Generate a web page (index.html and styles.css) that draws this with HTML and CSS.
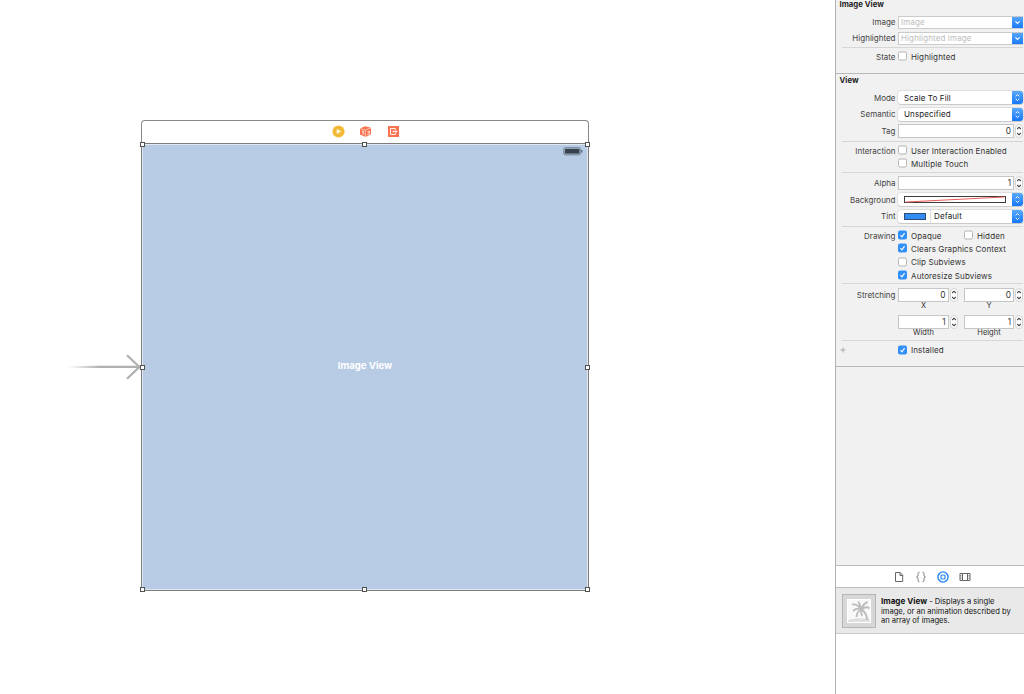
FILE: index.html
```html
<!DOCTYPE html>
<html lang="en">
<head>
<meta charset="utf-8">
<title>Storyboard</title>
<link rel="stylesheet" href="styles.css">
</head>
<body>
<svg class="defs" width="0" height="0">
  <symbol id="tick" viewBox="0 0 10 10"><path d="M2.800 5.200 4.400 7 7.300 2.900" fill="none" stroke="#fff" stroke-width="1.200"/></symbol>
  <symbol id="down" viewBox="0 0 12 13"><path d="m3.800 5.300 2.200 2.200 2.200-2.200" fill="none" stroke="#fff" stroke-width="1.200"/></symbol>
  <symbol id="updown" viewBox="0 0 12 13"><path d="m4 5.200 2-1.900 2 1.900M4 7.900l2 1.900 2-1.900" fill="none" stroke="#fff" stroke-width="1"/></symbol>
  <symbol id="step" viewBox="0 0 8 14"><rect x=".5" y=".5" width="7" height="13" rx="3.500" fill="#fff" stroke="#d2d2d2"/><path d="M2.200 5 4 3.200 5.800 5M2.200 9 4 10.800 5.800 9" fill="none" stroke="#444" stroke-width="1.100"/></symbol>
</svg>
<div class="app">
  <main class="canvas">
    <svg class="entry" width="74" height="30" viewBox="0 0 74 30">
      <defs><linearGradient id="fade"><stop offset="0" stop-color="#b0b0b0" stop-opacity="0"/><stop offset=".45" stop-color="#b0b0b0"/></linearGradient></defs>
      <path d="M0 14.200 28 13.800H71v2.200H0z" fill="url(#fade)"/>
      <path d="m59 3.200 12.500 11.700L59 26.800" fill="none" stroke="#b0b0b0" stroke-width="2.200"/>
    </svg>
    <div class="scene">
      <div class="dock">
        <svg width="13" height="13" viewBox="0 0 13 13"><circle cx="6.500" cy="6.500" r="6.100" fill="#f5bd3e"/><circle cx="6.500" cy="6.500" r="4.200" fill="none" stroke="#e9ae30" stroke-width=".7"/><path d="M5 4.600 8.600 6.500 5 8.400z" fill="#fffbe8" stroke="#fffbe8" stroke-width=".6"/></svg>
        <svg width="13" height="13" viewBox="0 0 13 13"><path d="m1 3.600 5.200-2.400L12 2.800v6.500L6.500 12 1 9.600z" fill="#fa7250"/><path d="M1 3.700 6.300 5 12 2.900M6.300 5v7" fill="none" stroke="#ffd5c9" stroke-width=".8"/><path d="m3 6.500 1.200-.4v3.500M8.300 7l2-.7v2.400l-1.800.8" fill="none" stroke="#fff" stroke-width=".9"/></svg>
        <svg width="13" height="13" viewBox="0 0 13 13"><rect x="1" y="1" width="11" height="11" fill="#fa7250"/><path d="M8.300 5V3.500H3.500v6h4.800V8M6.200 5.500v2M6.300 6.500h3" fill="none" stroke="#fff" stroke-width=".9"/><path d="m8.700 4.900 2 1.600-2 1.600z" fill="#fff"/></svg>
      </div>
      <div class="view">
        <svg class="battery" width="20" height="9" viewBox="0 0 20 9"><rect x=".6" y=".6" width="17" height="7.300" rx="2" fill="#96a6bb" stroke="#7b8b9f" stroke-width="1"/><rect x="2" y="2" width="14.300" height="4.500" rx=".5" fill="#36404b"/><path d="M18.800 3v2.600" stroke="#536274" stroke-width="1.200"/></svg>
        <span>Image View</span>
        <i class="h nw"></i><i class="h n"></i><i class="h ne"></i><i class="h w"></i><i class="h e"></i><i class="h sw"></i><i class="h s"></i><i class="h se"></i>
      </div>
    </div>
  </main>
  <aside class="side">
    <section class="group g1">
      <h2>Image View</h2>
      <div class="row r16"><label>Image</label><div class="field combo"><span class="t hint">Image</span><svg class="btn"><use href="#down"/></svg></div></div>
      <div class="row r16"><label>Highlighted</label><div class="field combo"><span class="t hint">Highlighted Image</span><svg class="btn"><use href="#down"/></svg></div></div>
      <hr class="m1">
      <div class="row r17"><label>State</label><b class="box"></b><span class="cap">Highlighted</span></div>
    </section>
    <section class="group g2">
      <h2>View</h2>
      <div class="row r17"><label>Mode</label><div class="field popup"><span class="t">Scale To Fill</span><svg class="btn"><use href="#updown"/></svg></div></div>
      <div class="row r16"><label>Semantic</label><div class="field popup"><span class="t">Unspecified</span><svg class="btn"><use href="#updown"/></svg></div></div>
      <div class="row r18"><label>Tag</label><div class="num">0</div><svg class="step"><use href="#step"/></svg></div>
      <hr class="m1">
      <div class="row r13 m2"><label>Interaction</label><b class="box"></b><span class="cap">User Interaction Enabled</span></div>
      <div class="row r13"><label></label><b class="box"></b><span class="cap">Multiple Touch</span></div>
      <hr class="m2">
      <div class="row r16 m2"><label>Alpha</label><div class="num">1</div><svg class="step"><use href="#step"/></svg></div>
      <div class="row r17"><label>Background</label><div class="field popup"><svg class="well" width="102" height="7" viewBox="0 0 102 7"><rect x=".5" y=".5" width="101" height="6" fill="#fff" stroke="#3c3c3c"/><path d="M2 6 100 1" stroke="#ee5a5a" stroke-width="1.200"/></svg><svg class="btn"><use href="#updown"/></svg></div></div>
      <div class="row r16"><label>Tint</label><div class="field popup"><i class="swatch"></i><span class="t split">Default</span><svg class="btn"><use href="#updown"/></svg></div></div>
      <hr class="m2">
      <div class="row r13 m2"><label>Drawing</label><b class="box on"><svg><use href="#tick"/></svg></b><span class="cap half">Opaque</span><b class="box"></b><span class="cap">Hidden</span></div>
      <div class="row r13"><label></label><b class="box on"><svg><use href="#tick"/></svg></b><span class="cap">Clears Graphics Context</span></div>
      <div class="row r14"><label></label><b class="box"></b><span class="cap">Clip Subviews</span></div>
      <div class="row r13"><label></label><b class="box on"><svg><use href="#tick"/></svg></b><span class="cap">Autoresize Subviews</span></div>
      <hr class="m1">
      <div class="row r15 m3"><label>Stretching</label><div class="num">0</div><svg class="step gap"><use href="#step"/></svg><div class="num">0</div><svg class="step"><use href="#step"/></svg></div>
      <div class="under"><span>X</span><span>Y</span></div>
      <div class="row r15 m5"><label></label><div class="num">1</div><svg class="step gap"><use href="#step"/></svg><div class="num">1</div><svg class="step"><use href="#step"/></svg></div>
      <div class="under"><span>Width</span><span>Height</span></div>
      <hr class="m4">
      <div class="row r14 m2"><label class="plus"><svg width="6" height="6" viewBox="0 0 6 6"><path d="M3 .5v5M.5 3h5" stroke="#aaa"/></svg></label><b class="box on"><svg><use href="#tick"/></svg></b><span class="cap">Installed</span></div>
    </section>
    <div class="blank"></div>
    <nav class="tabs">
      <svg width="12" height="12" viewBox="0 0 12 12" fill="none" stroke="#666"><path d="M2.500 1.500h4.700l2.500 2.700v6.300H2.500zM7 1.500v3h2.700"/></svg>
      <svg width="12" height="12" viewBox="0 0 12 12" fill="none" stroke="#777"><path d="M4.500 1.200C3 1.200 3 2 3 3.500S2.700 5.700 1.600 6C2.700 6.300 3 7 3 8.500s0 2.300 1.500 2.300M7.500 1.200C9 1.200 9 2 9 3.500s.3 2.200 1.400 2.500C9.300 6.300 9 7 9 8.500s0 2.300-1.500 2.300"/></svg>
      <svg width="12" height="12" viewBox="0 0 12 12" fill="none" stroke="#2384f7"><circle cx="6" cy="6" r="5.100" stroke-width="1.400"/><rect x="4" y="4" width="4" height="4" rx=".7" stroke-width="1.200"/></svg>
      <svg width="12" height="12" viewBox="0 0 12 12" fill="none" stroke="#666"><path d="M1 2.500h10v7H1zM3.500 2.500v7M8.500 2.500v7"/><path d="M1 4.800h2.500M1 7.200h2.500M8.500 4.800H11M8.500 7.200H11" stroke-width=".6"/></svg>
    </nav>
    <div class="item">
      <div class="thumb"><svg width="24" height="24" viewBox="0 0 24 24"><rect x=".5" y=".5" width="23" height="23" fill="#f8f8f8" stroke="#fff"/><path d="M1 21c7-2 14-2 22-1v3H1z" fill="#dedede"/><path d="M14.500 10C18 13 20 17 20 21M14.500 10C11 9 8 10 6 12M14.500 10C11 6 8 5 5 5.500M14.500 10C13 6 12 4 11.500 2.500M14.500 10C16 6 18 4 20.500 3M14.500 10C18 8 21 8 22.500 9.500M14.500 10C11 12 9.500 15 9.500 18M14.500 10C14 13 14 15 15 17" fill="none" stroke="#bcbcbc" stroke-width="1.900"/></svg></div>
      <p><strong>Image View</strong> - Displays a single<br>image, or an animation described by<br>an array of images.</p>
    </div>
  </aside>
</div>
</body>
</html>
```
FILE: styles.css
```css
* { box-sizing: border-box; }
body { margin: 0; background: #fff; color: #303030; font-family: Inter, "Liberation Sans", sans-serif; font-size: 8px; line-height: 10px; }
.defs { position: absolute; }
.app { display: flex; width: 1024px; height: 694px; overflow: hidden; }
.canvas { position: relative; width: 835px; flex: none; padding: 120px 0 0 141px; }
.entry { position: absolute; left: 68px; top: 352px; }
.scene { width: 448px; }
.dock { display: flex; justify-content: center; align-items: center; gap: 14.5px; height: 23px; padding: 0 0 1px 1px; border: 1px solid #888; border-bottom: 0; border-radius: 4px 4px 0 0; }
.view { position: relative; display: flex; align-items: center; justify-content: center; height: 448px; border: 1px solid #7c7c7c; background: #b7cbe4; box-shadow: inset 0 0 0 1px #e1e7ef; color: #fff; font-size: 9.6px; font-weight: 700; }
.view span { padding-bottom: 2px; }
.battery { position: absolute; right: 5px; top: 3px; }
.h { position: absolute; width: 5px; height: 5px; border: 1px solid #505050; background: #fff; }
.nw, .n, .ne { top: -2px; }
.sw, .s, .se { bottom: -2px; }
.nw, .w, .sw { left: -2px; }
.ne, .e, .se { right: -2px; }
.n, .s { left: 220px; }
.w, .e { top: 221px; }
.side { display: flex; flex-direction: column; flex: none; width: 189px; border-left: 1px solid #b2b2b2; background: linear-gradient(#f1f1f1 634px, #fff 634px); }
.group { flex: none; border-bottom: 1px solid #b9b9b9; }
.g1 { height: 74px; }
.g2 { height: 293px; }
h2 { margin: 0; padding-left: 3.5px; height: 14px; font-size: 7.8px; line-height: 9px; font-weight: 700; color: #252525; }
.g2 h2 { height: 15px; line-height: 13px; }
hr { height: 1px; margin: 0 1px 0 6px; border: 0; background: #d6d6d6; }
.row { display: flex; align-items: center; padding-right: 1px; white-space: nowrap; }
.r13 { height: 13px; } .r14 { height: 14px; } .r15 { height: 15px; } .r16 { height: 16px; } .r17 { height: 17px; } .r18 { height: 18px; }
.m1 { margin-top: 1px; } .m2 { margin-top: 2px; } .m3 { margin-top: 3px; } .m4 { margin-top: 4px; } .m5 { margin-top: 5px; }
label { width: 59.5px; margin-right: 2.5px; flex: none; text-align: right; color: #444; }
.plus { display: flex; padding-left: 4px; }
.field { display: flex; align-items: center; flex: 1; height: 13px; background: #fff; overflow: hidden; }
.combo { border: 1px solid #cbcbcb; border-right: 0; }
.popup { border-radius: 3px; box-shadow: 0 0 0 .5px #ccc, 0 1px 0 #c8c8c8; }
.t { flex: 1; padding-left: 6px; color: #222; letter-spacing: .12px; }
.combo .t { padding-left: 2px; }
.t.hint { color: #bcbcbc; }
.t.split { border-left: 1px solid #ddd; padding-left: 3px; line-height: 13px; }
.btn { width: 11px; height: 13px; flex: none; background: linear-gradient(#5aa9fb, #1677f7); }
.well { margin: 0 auto 0 6px; }
.swatch { width: 22px; height: 7px; margin: 0 4px 0 6px; border: 1px solid #2c4c73; background: #348df5; }
.num { flex: 1; height: 14px; padding-right: 2px; border: 1px solid #c6c6c6; background: #fff; text-align: right; font-size: 8.3px; line-height: 12px; color: #333; }
.step { width: 8px; height: 14px; flex: none; margin-left: 1px; }
.gap { margin-right: 6px; }
.box { width: 9px; height: 9px; flex: none; border: 1px solid #b5b5b5; border-radius: 2px; background: #fff; }
.box.on { border: 0; background: #3090f7; }
.box svg { display: block; width: 9px; height: 9px; }
.row .box, .row .cap { transform: translateY(-.5px); }
.cap { margin-left: 4px; color: #333; letter-spacing: .12px; }
.half { width: 53px; }
.under { display: flex; height: 7px; padding-left: 62.5px; line-height: 7px; font-size: 7.5px; }
.under span { width: 50px; margin-right: 15.5px; text-align: center; flex: none; }
.blank { flex: none; height: 198px; }
.tabs { display: flex; flex: none; align-items: center; justify-content: center; gap: 10.3px; height: 23px; padding-left: 4px; border-top: 1px solid #bbb; border-bottom: 1px solid #bbb; background: #fff; }
.item { display: flex; flex: none; height: 46px; padding: 6px 0 0 6px; background: #e9e9e9; border-bottom: 1px solid #c9c9c9; }
.thumb { display: flex; align-items: center; justify-content: center; flex: none; width: 34px; height: 34px; border: 1px solid #b5b5b5; background: #d7d7d7; }
.item p { margin: 3px 0 0 5px; white-space: nowrap; font-size: 7.55px; line-height: 9.7px; color: #111; }
.item strong { font-size: 8.1px; }
```
